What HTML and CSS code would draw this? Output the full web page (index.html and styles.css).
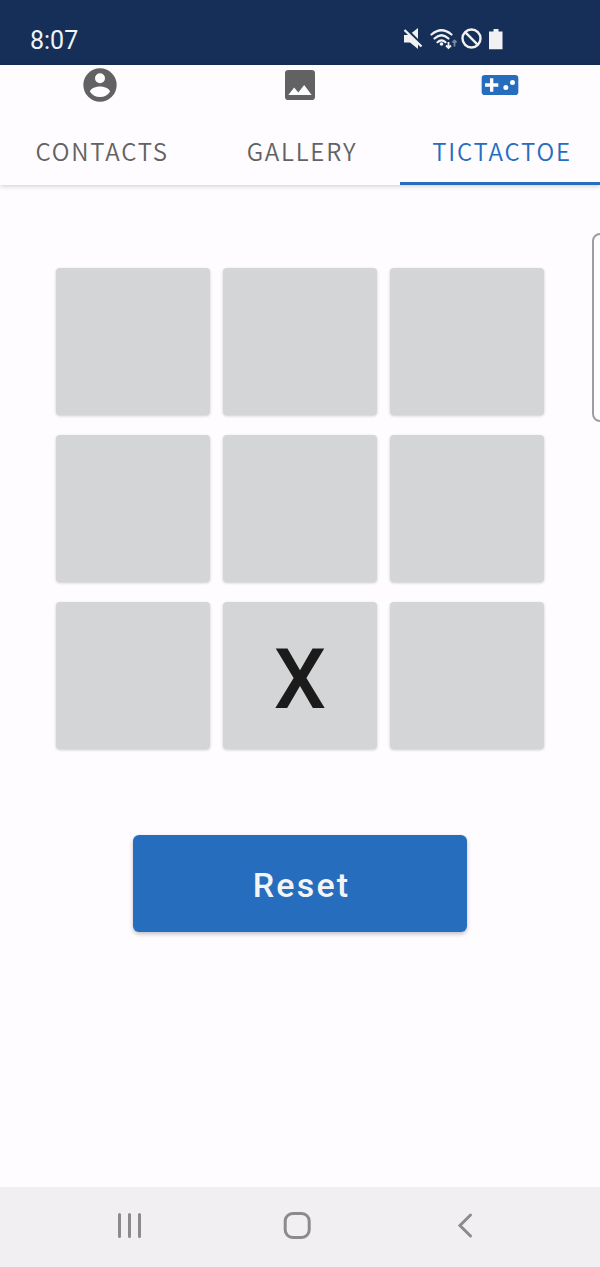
FILE: index.html
```
<!DOCTYPE html>
<html lang="en">
<head>
<meta charset="utf-8">
<title>TicTacToe</title>
<link rel="stylesheet" href="styles.css">
</head>
<body>
<div class="screen">
  <header class="status">
    <span class="time">8:07</span>
    <svg class="status-icons" width="110" height="30" viewBox="0 0 110 30" aria-hidden="true">
      <path class="fill" d="M9 10h5l9-7v21l-8-6.500h-6z"/>
      <path class="cut" d="M7 3l21 21"/>
      <path class="line" d="M9.500 5l17 16.500"/>
      <g class="line thin">
        <path d="M36.500 9.500q10-8.500 20 0"/>
        <path d="M39.500 13.500q7-6.500 14 0"/>
        <path d="M42.500 17.200q4-3.800 8 0"/>
      </g>
      <circle class="fill" cx="46.500" cy="19" r="1.800"/>
      <path class="line small" d="M53.500 17v6M51 20.500l2.500 2.500 2.500-2.500"/>
      <path class="line small faint" d="M59.500 21.500v-6M57.500 17.500l2-2 2 2"/>
      <circle class="line" cx="76.500" cy="13.500" r="9"/>
      <path class="line" d="M70.200 7.200l12.600 12.600"/>
      <path class="fill" d="M98.500 4h5v2.500h4v17.700h-13.500V6.500h4.500z"/>
    </svg>
  </header>
  <nav class="tabs">
    <div class="tab">
      <svg class="tab-icon" viewBox="0 0 24 24"><path fill-rule="evenodd" d="M12 2a10 10 0 1 0 0 20 10 10 0 0 0 0-20zm0 3a3 3 0 1 1 0 6 3 3 0 0 1 0-6zm0 14.200a7.200 7.200 0 0 1-6-3.220c.030-1.990 4-3.080 6-3.080s5.970 1.090 6 3.080a7.200 7.200 0 0 1-6 3.220z"/></svg>
      <span class="label">CONTACTS</span>
    </div>
    <div class="tab">
      <svg class="tab-icon" viewBox="0 0 24 24"><path fill-rule="evenodd" d="M21 19V5a2 2 0 0 0-2-2H5a2 2 0 0 0-2 2v14a2 2 0 0 0 2 2h14a2 2 0 0 0 2-2zM8.500 13.500l2.500 3.010L14.500 12l4.500 6H5z"/></svg>
      <span class="label">GALLERY</span>
    </div>
    <div class="tab active">
      <svg class="tab-icon" viewBox="0 0 24 24"><path fill-rule="evenodd" d="M21 6H3a2 2 0 0 0-2 2v8a2 2 0 0 0 2 2h18a2 2 0 0 0 2-2V8a2 2 0 0 0-2-2zm-10 7H8v3H6v-3H3v-2h3V8h2v3h3zm4.500 2a1.500 1.500 0 1 1 0-3 1.500 1.500 0 0 1 0 3zm4-3a1.500 1.500 0 1 1 0-3 1.500 1.500 0 0 1 0 3z"/></svg>
      <span class="label">TICTACTOE</span>
    </div>
  </nav>
  <main class="game">
    <div class="board">
      <button class="cell"></button><button class="cell"></button><button class="cell"></button>
      <button class="cell"></button><button class="cell"></button><button class="cell"></button>
      <button class="cell"></button><button class="cell">X</button><button class="cell"></button>
    </div>
    <button class="reset">Reset</button>
    <div class="edge-handle"></div>
  </main>
  <footer class="navbar">
    <svg viewBox="0 0 600 80" width="600" height="80" aria-hidden="true">
      <path d="M119.500 27.500v22M129.500 27.500v22M139.500 27.500v22"/>
      <rect x="285.200" y="26.500" width="24" height="24" rx="7.500"/>
      <path d="M470.500 28l-10.500 10.500 10.500 10.500"/>
    </svg>
  </footer>
</div>
</body>
</html>
```

FILE: styles.css
```
* { box-sizing: border-box; }
body { margin: 0; background: #fefcff; font-family: Roboto, sans-serif; }
button { border: 0; padding: 0; font-family: inherit; }
.screen { display: flex; flex-direction: column; width: 600px; height: 1267px; overflow: hidden; }

.status { display: flex; flex: none; align-items: flex-start; justify-content: space-between; height: 65px; padding: 24px 95px 0 30px; background: #162f58; color: #f1f3f7; }
.time { font-size: 25px; line-height: 33px; }
.status-icons { margin-top: 1px; }
.status-icons .fill { fill: #f1f1f4; }
.status-icons .line { fill: none; stroke: #f1f1f4; stroke-width: 2.4; }
.status-icons .cut { fill: none; stroke: #162f58; stroke-width: 3; transform: translate(2px, -1px); }
.status-icons .thin { stroke-width: 2.2; stroke-linecap: round; }
.status-icons .small { stroke-width: 1.8; }
.status-icons .faint { opacity: .45; }

.tabs { display: grid; flex: none; grid-template-columns: repeat(3, 1fr); height: 120px; box-shadow: 0 1px 5px rgba(0, 0, 0, .2); }
.tab { display: flex; flex-direction: column; align-items: center; color: #626264; }
.tab.active { color: #266dbd; border-bottom: 3px solid #266dbd; }
.tab-icon { width: 40px; height: 40px; fill: currentColor; }
.label { margin-top: 26px; padding-left: 4px; font: 350 24px/40px "Noto Sans CJK JP DemiLight", "Noto Sans CJK JP", sans-serif; letter-spacing: 1.8px; }

.game { position: relative; display: flex; flex: 1; flex-direction: column; align-items: center; padding-top: 83px; }
.board { display: grid; grid-template-columns: repeat(3, 154px); grid-auto-rows: 147px; gap: 20px 13px; }
.cell { border-radius: 4px; background: #d3d5d6; box-shadow: 0 1px 3px rgba(0, 0, 0, .2); color: #1b1b1b; font-size: 83px; font-weight: 500; line-height: 139px; padding-top: 8px; }
.reset { width: 334px; height: 97px; margin-top: 86px; border-radius: 6px; background: #266dbd; box-shadow: 0 2px 4px rgba(0, 0, 0, .25); color: #f4f4f4; font-size: 34px; font-weight: 500; letter-spacing: 2.2px; padding: 3px 0 0 3px; }
.edge-handle { position: absolute; top: 48px; right: -10px; width: 18px; height: 189px; border: 2px solid #9d9d9f; border-radius: 8px; }

.navbar { flex: none; height: 80px; background: #f1eff2; }
.navbar svg { display: block; fill: none; stroke: #8b8a8c; stroke-width: 3; stroke-linecap: round; }
```
